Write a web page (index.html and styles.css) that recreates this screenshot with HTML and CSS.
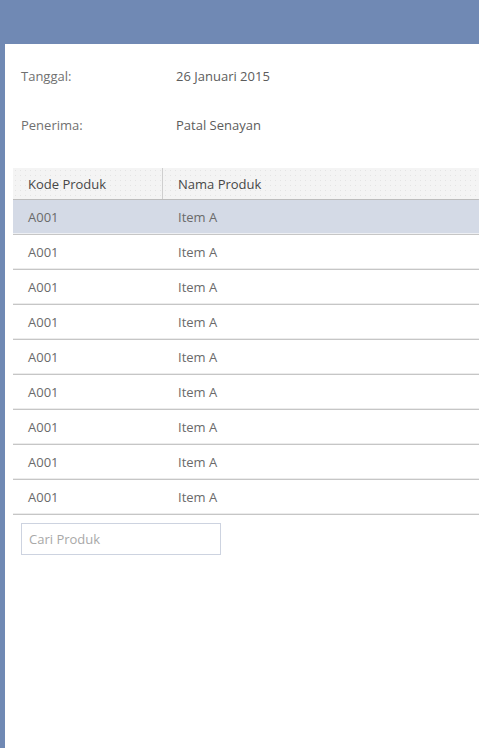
FILE: index.html
```html
<!DOCTYPE html>
<html lang="id">
<head>
<meta charset="utf-8">
<title>Penerimaan</title>
<link rel="stylesheet" href="styles.css">
</head>
<body>
<div class="topbar"></div>
<main class="panel">
  <div class="info">
    <div class="info-row"><span class="label">Tanggal:</span><span class="value">26 Januari 2015</span></div>
    <div class="info-row"><span class="label">Penerima:</span><span class="value">Patal Senayan</span></div>
  </div>
  <div class="table">
    <div class="thead">
      <div class="cell c1">Kode Produk</div>
      <div class="cell c2">Nama Produk</div>
    </div>
    <div class="row selected"><div class="cell c1">A001</div><div class="cell c2">Item A</div></div>
    <div class="row"><div class="cell c1">A001</div><div class="cell c2">Item A</div></div>
    <div class="row"><div class="cell c1">A001</div><div class="cell c2">Item A</div></div>
    <div class="row"><div class="cell c1">A001</div><div class="cell c2">Item A</div></div>
    <div class="row"><div class="cell c1">A001</div><div class="cell c2">Item A</div></div>
    <div class="row"><div class="cell c1">A001</div><div class="cell c2">Item A</div></div>
    <div class="row"><div class="cell c1">A001</div><div class="cell c2">Item A</div></div>
    <div class="row"><div class="cell c1">A001</div><div class="cell c2">Item A</div></div>
    <div class="row"><div class="cell c1">A001</div><div class="cell c2">Item A</div></div>
  </div>
  <input class="search" type="text" placeholder="Cari Produk">
</main>
</body>
</html>
```
FILE: styles.css
```css
html, body {
  margin: 0;
  padding: 0;
  height: 100%;
}
body {
  background: #7089b4;
  font-family: "Open Sans", "Noto Sans", sans-serif;
  font-size: 13px;
  color: #666;
  overflow: hidden;
}
.topbar {
  height: 44px;
}
.panel {
  margin-left: 5px;
  background: #fff;
  height: 704px;
  box-sizing: border-box;
  padding-top: 17px;
}
.info {
  display: flex;
  flex-direction: column;
  gap: 19px;
  padding-left: 16px;
}
.info-row {
  display: flex;
  height: 30px;
  align-items: center;
}
.label {
  width: 155px;
  color: #707070;
}
.value {
  color: #5c5c5c;
}
.table {
  margin-left: 8px;
  margin-top: 28px;
}
.thead {
  display: flex;
  height: 31px;
  align-items: stretch;
  background-color: #f4f4f4;
  background-image: radial-gradient(circle, #e4e4e4 0.5px, transparent 0.8px);
  background-size: 5px 5px;
  border-bottom: 1px solid #bdbdbd;
  color: #474747;
}
.cell {
  display: flex;
  align-items: center;
  box-sizing: border-box;
}
.c1 {
  width: 149px;
  padding-left: 15px;
}
.c2 {
  flex: 1;
  padding-left: 15px;
}
.thead .c1 {
  width: 150px;
  border-right: 1px solid #cfcfcf;
}
.row {
  display: flex;
  height: 35px;
  box-sizing: border-box;
  border-bottom: 1px solid #c6c6c6;
  box-shadow: inset 0 -1px 0 #ececec;
  color: #6a6a6a;
}
.row .c2 {
  padding-left: 16px;
}
.row.selected {
  background: #d4dae6;
  box-shadow: inset 0 -1px 0 #eef0f4;
}
.search {
  display: block;
  margin: 8px 0 0 16px;
  width: 200px;
  height: 32px;
  box-sizing: border-box;
  border: 1px solid #cdd3e0;
  padding: 0 7px;
  font-family: inherit;
  font-size: 13px;
  color: #555;
  outline: none;
}
.search::placeholder {
  color: #a8a8a8;
}
```
